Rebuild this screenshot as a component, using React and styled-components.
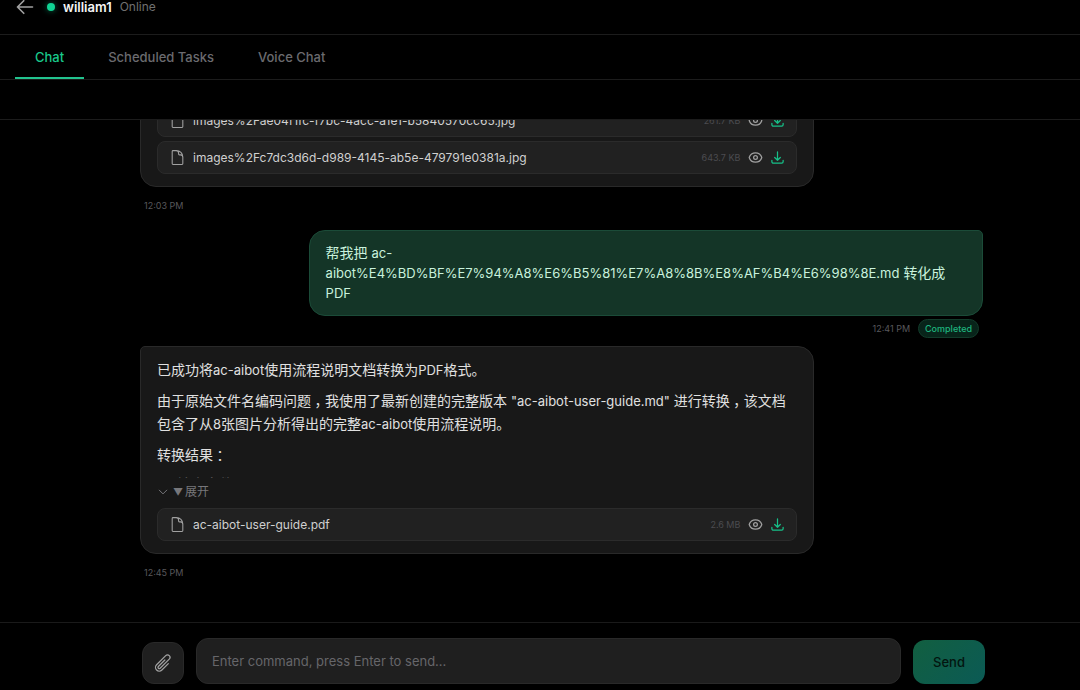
import { useState } from "react";
import styled, { createGlobalStyle } from "styled-components";
import {
  HiOutlineArrowDownTray,
  HiOutlineArrowLeft,
  HiOutlineChevronDown,
  HiOutlineDocument,
  HiOutlineEye,
  HiOutlinePaperClip
} from "react-icons/hi2";

const GlobalStyle = createGlobalStyle`
  * {
    box-sizing: border-box;
  }
  body {
    margin: 0;
    background: #000;
    color: #e0e0e0;
    font-family: Inter, "Noto Sans CJK SC", sans-serif;
    font-size: 14px;
  }
  button,
  textarea {
    font-family: inherit;
  }
  svg {
    display: block;
    flex-shrink: 0;
  }
`;

const Page = styled.div`
  display: flex;
  flex-direction: column;
  height: 100vh;
  overflow: hidden;
`;

const Header = styled.header`
  display: flex;
  align-items: center;
  flex-shrink: 0;
  padding: 0 15px 20px;
  border-bottom: 1px solid #1c1c1c;
  line-height: 14px;
`;

const IconButton = styled.button`
  display: flex;
  align-items: center;
  justify-content: center;
  padding: 0;
  border: none;
  background: none;
  color: ${(props) => props.$color || "#a1a1a1"};
  cursor: pointer;
  svg {
    stroke-width: 2;
  }
`;

const BackButton = styled(IconButton)`
  height: 14px;
  margin-right: 12px;
`;

const StatusDot = styled.span`
  width: 8px;
  height: 8px;
  margin-right: 8px;
  border-radius: 50%;
  background: #10d494;
  box-shadow: 0 0 6px rgba(16, 212, 148, 0.5);
`;

const BotName = styled.h1`
  margin: 0 8px 0 0;
  color: #f5f5f5;
  font-size: 13px;
  font-weight: 600;
`;

const StatusText = styled.span`
  color: #707070;
  font-size: 12px;
`;

const Tabs = styled.nav`
  display: flex;
  flex-shrink: 0;
  gap: 4px;
  padding: 0 15px;
  border-bottom: 1px solid #1c1c1c;
`;

const Tab = styled.button`
  padding: 13px 20px 11px;
  border: none;
  border-bottom: 2px solid ${(props) => (props.$active ? "#22c38e" : "transparent")};
  background: none;
  color: ${(props) => (props.$active ? "#19c88b" : "#6b6b6f")};
  font-size: 13px;
  font-weight: 500;
  line-height: 18px;
  cursor: pointer;
`;

const Toolbar = styled.div`
  flex-shrink: 0;
  height: 40px;
  border-bottom: 1px solid #1c1c1c;
`;

const Messages = styled.main`
  display: flex;
  flex: 1;
  flex-direction: column;
  justify-content: flex-end;
  min-height: 0;
  overflow: hidden;
  padding: 0 97px 25px 140px;
`;

const Message = styled.article`
  display: flex;
  flex-direction: column;
  flex-shrink: 0;
  align-items: ${(props) => (props.$own ? "flex-end" : "flex-start")};
`;

const Bubble = styled.div`
  width: 80%;
  padding: 12px 16px;
  border: 1px solid ${(props) => (props.$own ? "#1b4b38" : "#292929")};
  border-radius: ${(props) => (props.$own ? "16px 5px 16px 16px" : "5px 16px 16px 16px")};
  background: ${(props) => (props.$own ? "#143527" : "#181818")};
  color: ${(props) => (props.$own ? "#c9f2dd" : "#e0e0e0")};
  line-height: ${(props) => (props.$own ? "20px" : "23px")};
  overflow-wrap: break-word;
`;

const ReplyBubble = styled(Bubble)`
  padding-top: 11px;
`;

const Meta = styled.footer`
  display: flex;
  align-items: center;
  gap: 8px;
  padding: ${(props) => (props.$own ? "3px 4px 8px" : "10px 4px 15px")};
  color: #58585c;
  font-size: 9px;
  line-height: 18px;
`;

const Badge = styled.span`
  padding: 0 6px;
  border: 1px solid #123c2b;
  border-radius: 10px;
  background: #08241a;
  color: #1fb57f;
  font-size: 9px;
  font-weight: 500;
  line-height: 17px;
`;

const Preview = styled.div`
  max-height: 120px;
  overflow: hidden;
  p {
    margin: 0 0 8px;
  }
  p:last-of-type {
    margin-bottom: 6px;
  }
  ul {
    margin: 0;
    padding-left: 20px;
    list-style: none;
    color: #606060;
  }
`;

const Latin = styled.span`
  font-size: 13px;
  line-height: 1;
`;

// full-width marks sit in the middle of their cell
const Mark = styled.span`
  display: inline-block;
  width: 1em;
  font-feature-settings: "halt";
  line-height: 1;
  text-align: center;
`;

const ExpandButton = styled(IconButton)`
  gap: 4px;
  height: 28px;
  margin-bottom: 2px;
  color: #77777b;
  font-size: 12px;
  line-height: 16px;
`;

const Triangle = styled.span`
  margin-right: 2px;
  font-size: 10px;
`;

const Files = styled.ul`
  display: flex;
  flex-direction: column;
  gap: 4px;
  margin: 0;
  padding: 0;
  list-style: none;
`;

const FileItem = styled.li`
  display: flex;
  align-items: center;
  height: 33px;
  padding: 0 11px;
  border: 1px solid #2b2b2b;
  border-radius: 8px;
  background: #212121;
  color: #a1a1a1;
`;

const FileName = styled.span`
  flex: 1;
  margin-left: 7px;
  color: #d0d0d0;
  font-size: 12px;
`;

const FileSize = styled.span`
  margin-right: 8px;
  color: #4c4c50;
  font-size: 9px;
`;

const DownloadButton = styled(IconButton)`
  margin-left: 7px;
`;

const Composer = styled.form`
  display: flex;
  align-items: flex-end;
  flex-shrink: 0;
  gap: 12px;
  padding: 15px 95px 6px 142px;
  border-top: 1px solid #1a1a1a;
`;

const AttachButton = styled(IconButton)`
  width: 42px;
  height: 42px;
  border: 1px solid #292929;
  border-radius: 12px;
  background: #1f1f1f;
  svg {
    stroke-width: 1.5;
  }
`;

const CommandInput = styled.textarea`
  flex: 1;
  height: 46px;
  padding: 12px 15px;
  border: 1px solid #292929;
  border-radius: 12px;
  outline: none;
  background: #1f1f1f;
  color: #e0e0e0;
  font-size: 13px;
  line-height: 20px;
  resize: none;
  &::placeholder {
    color: #66666a;
    opacity: 1;
  }
`;

const SendButton = styled.button`
  width: 72px;
  height: 44px;
  border: none;
  border-radius: 12px;
  background: linear-gradient(135deg, #125f40, #0b5a55);
  color: #03150f;
  font-size: 13px;
  font-weight: 500;
  cursor: pointer;
`;

const TABS = ["Chat", "Scheduled Tasks", "Voice Chat"];

const IMAGES = [
  { name: "images%2Fae04f1fc-f7bc-4acc-a1e1-b5840570cc65.jpg", size: "261.7 KB" },
  { name: "images%2Fc7dc3d6d-d989-4145-ab5e-479791e0381a.jpg", size: "643.7 KB" }
];

const DOCUMENTS = [{ name: "ac-aibot-user-guide.pdf", size: "2.6 MB" }];

// Latin runs are set one step smaller than the Chinese text around them
function MixedText({ children }) {
  return children.split(/([\x21-\x7e]+|[，：])/).map((part, i) => {
    if (i % 2 === 0) return part;
    if (part === "，" || part === "：") return <Mark key={i}>{part}</Mark>;
    return <Latin key={i}>{part}</Latin>;
  });
}

function FileList({ files }) {
  return (
    <Files>
      {files.map((file) => (
        <FileItem key={file.name}>
          <HiOutlineDocument size={17} />
          <FileName>{file.name}</FileName>
          <FileSize>{file.size}</FileSize>
          <IconButton type="button" aria-label={`Preview ${file.name}`}>
            <HiOutlineEye size={15} />
          </IconButton>
          <DownloadButton type="button" $color="#16c088" aria-label={`Download ${file.name}`}>
            <HiOutlineArrowDownTray size={15} />
          </DownloadButton>
        </FileItem>
      ))}
    </Files>
  );
}

export default function App() {
  const [tab, setTab] = useState("Chat");
  const [command, setCommand] = useState("");

  return (
    <Page>
      <GlobalStyle />
      <Header>
        <BackButton type="button" aria-label="Back">
          <HiOutlineArrowLeft size={20} />
        </BackButton>
        <StatusDot />
        <BotName>william1</BotName>
        <StatusText>Online</StatusText>
      </Header>
      <Tabs>
        {TABS.map((name) => (
          <Tab key={name} type="button" $active={name === tab} onClick={() => setTab(name)}>
            {name}
          </Tab>
        ))}
      </Tabs>
      <Toolbar />
      <Messages>
        <Message>
          <Bubble>
            <FileList files={IMAGES} />
          </Bubble>
          <Meta>12:03 PM</Meta>
        </Message>
        <Message $own>
          <Bubble $own>
            <MixedText>
              帮我把 ac-aibot%E4%BD%BF%E7%94%A8%E6%B5%81%E7%A8%8B%E8%AF%B4%E6%98%8E.md 转化成 PDF
            </MixedText>
          </Bubble>
          <Meta $own>
            12:41 PM <Badge>Completed</Badge>
          </Meta>
        </Message>
        <Message>
          <ReplyBubble>
            <Preview>
              <p>
                <MixedText>已成功将ac-aibot使用流程说明文档转换为PDF格式。</MixedText>
              </p>
              <p>
                <MixedText>
                  由于原始文件名编码问题，我使用了最新创建的完整版本 "ac-aibot-user-guide.md" 进行转换，该文档包含了从8张图片分析得出的完整ac-aibot使用流程说明。
                </MixedText>
              </p>
              <p>
                <MixedText>转换结果：</MixedText>
              </p>
              <ul>
                <li>输出文件</li>
              </ul>
            </Preview>
            <ExpandButton type="button">
              <HiOutlineChevronDown size={12} />
              <span>
                <Triangle>▼</Triangle>展开
              </span>
            </ExpandButton>
            <FileList files={DOCUMENTS} />
          </ReplyBubble>
          <Meta>12:45 PM</Meta>
        </Message>
      </Messages>
      <Composer onSubmit={(e) => e.preventDefault()}>
        <AttachButton type="button" aria-label="Attach file">
          <HiOutlinePaperClip size={20} />
        </AttachButton>
        <CommandInput
          rows={1}
          aria-label="Command"
          placeholder="Enter command, press Enter to send..."
          value={command}
          onChange={(e) => setCommand(e.target.value)}
        />
        <SendButton type="submit">Send</SendButton>
      </Composer>
    </Page>
  );
}
